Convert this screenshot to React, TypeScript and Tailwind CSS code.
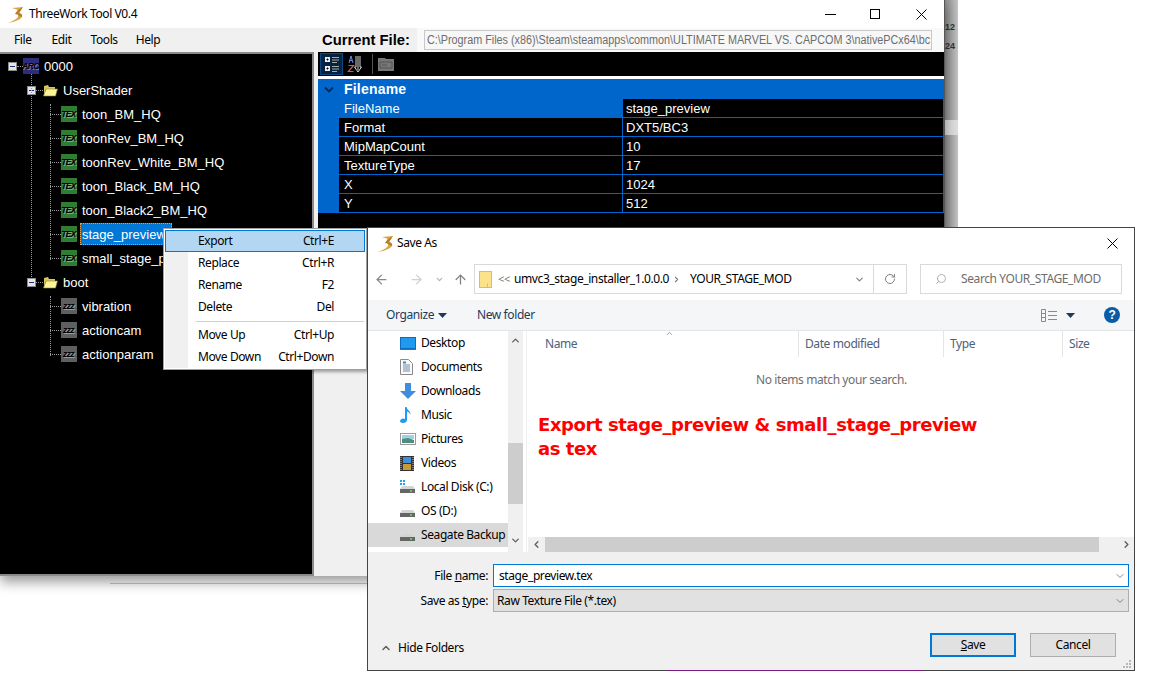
import type { ReactNode } from 'react'
import { ArrowLeft, ArrowRight, ArrowUp, ChevronDown, ChevronUp, ChevronLeft, ChevronRight, RotateCw, Search } from 'lucide-react'

const ui = "font-['Noto_Sans',sans-serif] tracking-[-0.4px]"
const classic = "font-['Liberation_Sans',sans-serif]"

function Logo() {
  return (
    <svg width="16" height="17" viewBox="0 0 16 17">
      <path d="M4 2 L15 1 L11 7 Q15 8 14 11 Q11 15 0 17 Q8 14 10 11 Q11 8 7 8 L10 4 Z" fill="#dba445" />
      <path d="M10 4 L15 1 L11 7 Q15 8 14 11 L11 10 Q11 8 7 8 Z" fill="#b97f28" />
    </svg>
  )
}

function Expander() {
  return (
    <span className="w-[9px] h-[9px] bg-[#e6e6e6] border border-[#8a8a8a] flex items-center justify-center shrink-0">
      <span className="w-[5px] h-px bg-[#1c2f78]" />
    </span>
  )
}

function FileIcon({ label, bg }: { label: string; bg: string }) {
  return (
    <span className={`${bg} w-4 h-4 shrink-0 flex items-center justify-center overflow-hidden pr-px font-['Liberation_Sans',sans-serif] font-bold italic text-[8.500px] tracking-[-0.6px] leading-none text-black [text-shadow:1px_1px_0_rgba(255,255,255,0.4)]`}>
      {label}
    </span>
  )
}

function FolderIcon() {
  return (
    <svg width="15" height="13" viewBox="0 0 15 13" className="shrink-0">
      <path d="M1 2 L5 1 L6 3 L12 3 L12 5 L3 5 L1 11 Z" fill="#d9c75a" />
      <path d="M0.5 12 L3 5 L14.5 5 L12.5 12 Z" fill="#fff59a" stroke="#8a8036" strokeWidth="0.6" />
    </svg>
  )
}

type TreeItem = { name: string; kind: 'tex' | 'raw' }

const userShader: TreeItem[] = [
  { name: 'toon_BM_HQ', kind: 'tex' },
  { name: 'toonRev_BM_HQ', kind: 'tex' },
  { name: 'toonRev_White_BM_HQ', kind: 'tex' },
  { name: 'toon_Black_BM_HQ', kind: 'tex' },
  { name: 'toon_Black2_BM_HQ', kind: 'tex' },
  { name: 'stage_preview', kind: 'tex' },
  { name: 'small_stage_preview', kind: 'tex' },
]

const boot: TreeItem[] = [
  { name: 'vibration', kind: 'raw' },
  { name: 'actioncam', kind: 'raw' },
  { name: 'actionparam', kind: 'raw' },
]

function LeafRow({ item }: { item: TreeItem }) {
  const selected = item.name === 'stage_preview'
  return (
    <div className="h-6 flex items-center pl-[61px]">
      <FileIcon label={item.kind === 'tex' ? 'TEX' : 'zzz'} bg={item.kind === 'tex' ? 'bg-[#2f7d32]' : 'bg-[#5f5f5f]'} />
      <span className={selected ? 'ml-[3px] pl-px w-[92px] h-[22px] leading-[21px] bg-[#0078d7] border border-dotted border-[#e8a050]' : 'ml-[5px] pt-[2px]'}>
        {item.name}
      </span>
    </div>
  )
}

function Tree() {
  return (
    <div className={`${classic} relative w-[314px] shrink-0 bg-black border-t-2 border-r-2 border-b-2 border-[#8a8a8a] text-[13px] text-white`}>
      <div className="h-6 flex items-center pl-2">
        <Expander />
        <span className="ml-[6px]"><FileIcon label="ARC" bg="bg-[#2d2d80]" /></span>
        <span className="ml-[5px] pt-[2px]">0000</span>
      </div>
      <div className="h-6 flex items-center pl-[27px]">
        <Expander />
        <span className="ml-[7px]"><FolderIcon /></span>
        <span className="ml-[5px] pt-[2px]">UserShader</span>
      </div>
      {userShader.map((item) => <LeafRow key={item.name} item={item} />)}
      <div className="h-6 flex items-center pl-[27px]">
        <Expander />
        <span className="ml-[7px]"><FolderIcon /></span>
        <span className="ml-[5px] pt-[2px]">boot</span>
      </div>
      {boot.map((item) => <LeafRow key={item.name} item={item} />)}
      {/* dotted connectors */}
      <div className="absolute left-[31px] top-[20px] h-[205px] border-l border-dotted border-[#9a9a9a]" />
      <div className="absolute left-[50px] top-[50px] h-[156px] border-l border-dotted border-[#9a9a9a]" />
      <div className="absolute left-[50px] top-[242px] h-[60px] border-l border-dotted border-[#9a9a9a]" />
      {[60, 84, 108, 132, 156, 180, 204, 252, 276, 300].map((top) => (
        <div key={top} className="absolute left-[50px] w-[11px] border-t border-dotted border-[#9a9a9a]" style={{ top }} />
      ))}
      <div className="absolute left-[17px] top-[12px] w-[6px] border-t border-dotted border-[#9a9a9a]" />
      <div className="absolute left-[36px] top-[36px] w-[7px] border-t border-dotted border-[#9a9a9a]" />
      <div className="absolute left-[36px] top-[228px] w-[7px] border-t border-dotted border-[#9a9a9a]" />
    </div>
  )
}

const props = [
  ['FileName', 'stage_preview'],
  ['Format', 'DXT5/BC3'],
  ['MipMapCount', '10'],
  ['TextureType', '17'],
  ['X', '1024'],
  ['Y', '512'],
]

function PropertyGrid() {
  return (
    <div className={`${classic} bg-[#0066cc] text-white text-[13px] pr-px`}>
      <div className="h-5 flex items-center pt-px">
        <svg width="12" height="8" viewBox="0 0 12 8" className="ml-[5px]">
          <path d="M2 1.5 L6 5.5 L10 1.5" fill="none" stroke="#0a2a55" strokeWidth="1.8" />
        </svg>
        <span className="ml-[9px] font-bold text-[14px] tracking-[0.2px]">Filename</span>
      </div>
      {props.map(([name, value], i) => (
        <div key={name} className="h-[19px] flex pl-[21px] leading-[17px]">
          <span className={`w-[283px] pl-[5px] pt-px border-b border-[#0066cc] ${i === 0 ? '' : 'bg-black'}`}>{name}</span>
          <span className="flex-1 ml-px pl-[3px] pt-px bg-black border-b border-[#0066cc]">{value}</span>
        </div>
      ))}
    </div>
  )
}

function MainWindow() {
  return (
    <div className="absolute left-0 top-0 w-[945px] h-[576px] flex flex-col bg-[#f0f0f0] border-r border-[#555555] shadow-[0_6px_12px_rgba(0,0,0,0.4)]">
      <div className={`${ui} h-7 shrink-0 bg-white flex items-center pl-2 text-[12px] text-black`}>
        <Logo />
        <span className="ml-[5px]">ThreeWork Tool V0.4</span>
        <div className="ml-auto flex items-center pr-[17px]">
          <span className="w-[11px] h-px bg-black" />
          <span className="ml-[34px] w-[10px] h-[10px] border border-black" />
          <svg width="11" height="11" viewBox="0 0 11 11" className="ml-[36px]">
            <path d="M0.5 0.5 L10.5 10.5 M10.5 0.5 L0.5 10.5" stroke="#000" strokeWidth="1" />
          </svg>
        </div>
      </div>
      <div className="h-6 shrink-0 flex bg-[#f9f9f9]">
        <div className={`${ui} w-[318px] bg-[#f0f0f0] flex items-center text-[12px] text-black`}>
          <span className="ml-[14px]">File</span>
          <span className="ml-[20px]">Edit</span>
          <span className="ml-[19px]">Tools</span>
          <span className="ml-[18px]">Help</span>
        </div>
        <div className={`${classic} w-[99px] pl-1 bg-[#f0f0f0] flex items-center font-bold text-[14.8px] text-black whitespace-nowrap`}>Current File:</div>
        <div className={`${classic} ml-[7px] mt-[2px] w-[508px] h-5 bg-[#f7f7f7] border border-[#c8c8c8] pl-[2px] pr-px text-[12px] leading-[18px] text-[#6d6d6d] overflow-hidden whitespace-nowrap`}>
          <span className="inline-block origin-left scale-x-[0.9]">
            {'C:\\Program Files (x86)\\Steam\\steamapps\\common\\ULTIMATE MARVEL VS. CAPCOM 3\\nativePCx64\\bc'}
          </span>
        </div>
      </div>
      <div className="flex flex-1 min-h-0">
        <Tree />
        <div className="ml-1 flex-1 flex flex-col">
          <div className="h-6 bg-black flex items-center pl-[2px]">
            <span className="w-[23px] h-[22px] bg-[#06233f] border border-[#0a4a80] flex items-center justify-center">
              <svg width="16" height="16" viewBox="0 0 16 16">
                <path d="M1 1h5v5H1zM1 10h5v5H1z" fill="#f0f0f0" />
                <path d="M2.5 3.5h2M3.5 2.5v2M2.5 12.5h2M3.5 11.5v2" stroke="#000" />
                <path d="M8 1.5h7M8 4h7M8 6.5h5M8 10.5h7M8 13h7M8 15.5h5" stroke="#aaaaaa" />
              </svg>
            </span>
            <svg width="18" height="18" viewBox="0 0 18 18" className="ml-[3px]">
              <path d="M3 8 L5 1 L7 8 M3.8 5.5 H6.2" fill="none" stroke="#6f8fe0" strokeWidth="1" />
              <path d="M2.5 10.5 H7.5 L2.5 16.5 H7.5" fill="none" stroke="#d05a5a" strokeWidth="1.2" />
              <path d="M12 1 V15 M10 1 V12 L8.5 12 L12 17 L15.5 12 L14 12 V1" fill="none" stroke="#e8e8e8" strokeWidth="0.9" />
            </svg>
            <span className="ml-[8px] w-px h-5 bg-[#555555]" />
            <svg width="16" height="14" viewBox="0 0 16 14" className="ml-[5px]">
              <path d="M0 1h7l1 1h8v12H0z" fill="#777777" />
              <path d="M2 5h12v6H2z" fill="none" stroke="#555555" />
              <path d="M4 8h5" stroke="#555555" />
            </svg>
          </div>
          <div className="h-[3px] bg-white" />
          <PropertyGrid />
          <div className="h-[15px] bg-black" />
        </div>
      </div>
    </div>
  )
}

const menuItems: ([string, string] | null)[] = [
  ['Export', 'Ctrl+E'],
  ['Replace', 'Ctrl+R'],
  ['Rename', 'F2'],
  ['Delete', 'Del'],
  null,
  ['Move Up', 'Ctrl+Up'],
  ['Move Down', 'Ctrl+Down'],
]

function ContextMenu() {
  return (
    <div className={`${ui} absolute left-[163px] top-[228px] w-[204px] h-[142px] bg-white border border-[#a0a0a0] p-px text-[12px] text-black shadow-[2px_2px_3px_rgba(0,0,0,0.35)]`}>
      <div className="absolute left-px top-px bottom-px w-[23px] bg-[#f0f0f0]" />
      {menuItems.map((item, i) =>
        item ? (
          <div key={item[0]} className={`relative h-[22px] flex items-center justify-between pl-[33px] pr-[31px] ${i === 0 ? 'bg-[#b3d7f3] border border-[#0078d7]' : ''}`}>
            <span className={i === 0 ? '-ml-px' : ''}>{item[0]}</span>
            <span className={i === 0 ? '-mr-px' : ''}>{item[1]}</span>
          </div>
        ) : (
          <div key="sep" className="relative h-[6px] flex items-center pl-[31px] pr-px">
            <span className="w-full h-px bg-[#d0d0d0]" />
          </div>
        ),
      )}
    </div>
  )
}

function NavIcon({ name }: { name: string }) {
  if (name === 'Desktop') {
    return (
      <svg width="16" height="13" viewBox="0 0 16 13">
        <rect x="0.5" y="0.5" width="15" height="11" fill="#1e9af0" stroke="#0f6cc0" />
        <path d="M0 12.5h16" stroke="#5a6a7a" />
      </svg>
    )
  }
  if (name === 'Documents') {
    return (
      <svg width="13" height="16" viewBox="0 0 13 16">
        <path d="M0.5 0.5h8l4 4v11h-12z" fill="#fafafa" stroke="#8a8a8a" />
        <path d="M3 6h7M3 8h7M3 10h7M3 12h7" stroke="#6a8ab0" />
        <path d="M3 2.5h3v2H3z" fill="#3a8ad0" />
      </svg>
    )
  }
  if (name === 'Downloads') {
    return (
      <svg width="16" height="16" viewBox="0 0 16 16">
        <path d="M5 0h6v8h5l-8 8-8-8h5z" fill="#3f8fdc" />
      </svg>
    )
  }
  if (name === 'Music') {
    return (
      <svg width="12" height="16" viewBox="0 0 12 16">
        <path d="M5 0h1.5c.5 3 4.500 4 4 8-.3-2-2-3-3.500-3.500V13c0 2-2 3-4 3-2 0-3-1-3-2s1.500-2.500 3-2.500c.8 0 1.500.2 2 .5z" fill="#1e9af0" />
      </svg>
    )
  }
  if (name === 'Pictures') {
    return (
      <svg width="16" height="12" viewBox="0 0 16 12">
        <rect x="0.500" y="0.500" width="15" height="11" fill="#fff" stroke="#9a9a9a" />
        <path d="M2 2h12v4H2z" fill="#9fd0e8" />
        <path d="M2 6 L8 5 L14 7 V10 H2 Z" fill="#4f8f7a" />
      </svg>
    )
  }
  if (name === 'Videos') {
    return (
      <svg width="14" height="15" viewBox="0 0 14 15">
        <rect width="14" height="15" fill="#333333" />
        <path d="M3 1h8v6H3z" fill="#3f8fdc" />
        <path d="M3 8h8v6H3z" fill="#c89a3a" />
        <path d="M1 1v13M13 1v13" stroke="#cccccc" strokeDasharray="1 1" />
      </svg>
    )
  }
  return (
    <svg width="15" height="14" viewBox="0 0 15 14">
      {name.startsWith('Local') && <path d="M0 0h2v2H0zM3 0h2v2H3zM0 3h2v2H0zM3 3h2v2H3z" fill="#1ea5f0" />}
      <path d="M2 6h11l2 3H0z" fill="#d4d4d4" />
      <rect x="0" y="9" width="15" height="4" fill="#666666" />
      <rect x="10" y="10" width="2" height="2" fill="#4fd04f" />
    </svg>
  )
}

const navItems = ['Desktop', 'Documents', 'Downloads', 'Music', 'Pictures', 'Videos', 'Local Disk (C:)', 'OS (D:)', 'Seagate Backup']

function HeaderCell({ label, width, pad }: { label: string; width: string; pad: string }) {
  return <div className={`${width} ${pad} h-[26px] leading-[25px] border-r border-[#e5e5e5] text-[#4c607a] shrink-0`}>{label}</div>
}

function Caret({ className, fill }: { className: string; fill: string }) {
  return (
    <svg width="9" height="5" viewBox="0 0 9 5" className={className}>
      <path d="M0 0h9L4.500 5z" fill={fill} />
    </svg>
  )
}

function SaveDialog() {
  return (
    <div className={`${ui} absolute left-[367px] top-[227px] w-[768px] h-[444px] flex flex-col bg-[#f0f0f0] border border-[#444444] text-[12px] text-black`}>
      <div className="h-[30px] shrink-0 bg-white flex items-center pl-[10px]">
        <Logo />
        <span className="ml-[3px]">Save As</span>
        <svg width="11" height="11" viewBox="0 0 11 11" className="ml-auto mr-[16px]">
          <path d="M0.500 0.500 L10.500 10.500 M10.500 0.500 L0.500 10.500" stroke="#000" strokeWidth="1" />
        </svg>
      </div>
      <div className="h-[42px] shrink-0 bg-white flex items-center">
        <ArrowLeft size={15} strokeWidth={2} className="ml-[6px] text-[#8a8a8a]" />
        <ArrowRight size={15} strokeWidth={2} className="ml-[20px] text-[#d0d0d0]" />
        <ChevronDown size={9} strokeWidth={3} className="ml-[11px] text-[#b0b0b0]" />
        <ArrowUp size={15} strokeWidth={2} className="ml-[9px] text-[#808080]" />
        <div className="ml-[6px] w-[400px] h-[30px] border border-[#d9d9d9] flex items-center">
          <svg width="13" height="17" viewBox="0 0 13 17" className="ml-[4px]">
            <rect x="0.500" y="0.500" width="12" height="16" fill="#fce28a" stroke="#e2bd55" />
            <path d="M8.500 12.500V16.500" stroke="#e2bd55" />
          </svg>
          <span className="ml-[6px] w-[16px] text-[#7a7a7a] text-[11px]">{'<<'}</span>
          <span>umvc3_stage_installer_1.0.0.0</span>
          <ChevronRight size={9} strokeWidth={3} className="ml-[3px] text-[#808080]" />
          <span className="ml-[9px]">YOUR_STAGE_MOD</span>
          <ChevronDown size={11} strokeWidth={2.500} className="ml-auto mr-[8px] text-[#808080]" />
        </div>
        <div className="w-[33px] h-[30px] border border-l-0 border-[#d9d9d9] flex items-center justify-center">
          <RotateCw size={12} strokeWidth={2} className="text-[#808080]" />
        </div>
        <div className="ml-[13px] w-[202px] h-[30px] border border-[#d9d9d9] flex items-center text-[#6d6d6d]">
          <Search size={12} strokeWidth={1.500} className="ml-[14px] -scale-x-100 text-[#9a9a9a]" />
          <span className="ml-[14px]">Search YOUR_STAGE_MOD</span>
        </div>
      </div>
      <div className="h-[31px] shrink-0 bg-[#f5f6f7] border-b border-[#e5e5e5] flex items-center text-[#1e395b]">
        <span className="ml-[18px] w-[51px]">Organize</span>
        <Caret className="ml-px" fill="#1e395b" />
        <span className="ml-[30px]">New folder</span>
        <svg width="16" height="13" viewBox="0 0 16 13" className="ml-auto">
          <path d="M0.500 0.500h4v12h-4zM0.500 4.500h4M0.500 8.500h4M7 2.500h9M7 6.500h9M7 10.500h9" fill="none" stroke="#8a8a8a" />
        </svg>
        <Caret className="ml-[9px]" fill="#1e395b" />
        <span className={`${classic} ml-[29px] mr-[14px] w-4 h-4 rounded-full bg-[#0a5ca8] text-white font-bold text-[12px] leading-4 text-center`}>?</span>
      </div>
      <div className="h-[221px] shrink-0 flex bg-white">
        <div className="w-[140px] shrink-0 overflow-hidden">
          {navItems.map((name) => (
            <div key={name} className={`h-6 flex items-center ${name === 'Seagate Backup' ? 'bg-[#d9d9d9]' : ''}`}>
              <span className="w-[53px] shrink-0 pl-[32px] flex justify-start"><NavIcon name={name} /></span>
              <span className="whitespace-nowrap">{name}</span>
            </div>
          ))}
        </div>
        <div className="w-[15px] shrink-0 bg-[#f0f0f0] flex flex-col items-center">
          <ChevronUp size={11} strokeWidth={3} className="mt-[4px] text-[#606060]" />
          <div className="mt-[97px] w-full h-[61px] bg-[#cdcdcd]" />
          <ChevronDown size={11} strokeWidth={3} className="mt-[31px] text-[#606060]" />
        </div>
        <div className="flex-1 flex flex-col ml-[3px] border-l border-[#f0f0f0] relative">
          <div className="flex h-[26px]">
            <HeaderCell label="Name" width="w-[272px]" pad="pl-[18px]" />
            <HeaderCell label="Date modified" width="w-[145px]" pad="pl-[6px]" />
            <HeaderCell label="Type" width="w-[119px]" pad="pl-[6px]" />
            <div className="pl-[6px] leading-[25px] text-[#4c607a]">Size</div>
          </div>
          <ChevronUp size={9} strokeWidth={2} className="absolute left-[138px] top-[-2px] text-[#808080]" />
          <div className="mt-[14px] ml-[229px] text-[#6d6d6d]">No items match your search.</div>
          <div className="mt-[24px] ml-[11px] font-['DejaVu_Sans',sans-serif] font-bold text-[18px] leading-6 tracking-[-0.42px] text-[#ff0000]">
            Export stage_preview &amp; small_stage_preview<br />as tex
          </div>
          <div className="mt-auto ml-[1px] h-[15px] flex items-center bg-[#f0f0f0]">
            <span className="w-[17px] flex justify-center"><ChevronLeft size={11} strokeWidth={3} className="text-[#606060]" /></span>
            <span className="w-[554px] h-full bg-[#cdcdcd]" />
            <ChevronRight size={11} strokeWidth={3} className="ml-auto mr-[2px] text-[#606060]" />
          </div>
        </div>
      </div>
      <div className="flex-1 pt-[12px] relative">
        <FormRow label={<>File <u>n</u>ame:</>}>
          <div className="w-[636px] h-[23px] bg-white border border-[#0078d7] flex items-center pl-[5px]">
            <span>stage_preview.tex</span>
            <ChevronDown size={12} strokeWidth={1.500} className="ml-auto mr-[2px] text-[#606060]" />
          </div>
        </FormRow>
        <div className="h-[2px]" />
        <FormRow label={<>Save as <u>t</u>ype:</>}>
          <div className="w-[636px] h-[23px] bg-[#e1e1e1] border border-[#adadad] flex items-center pl-[3px]">
            <span>Raw Texture File (*.tex)</span>
            <ChevronDown size={12} strokeWidth={1.500} className="ml-auto mr-[2px] text-[#606060]" />
          </div>
        </FormRow>
        <div className="mt-[21px] h-6 flex items-center">
          <ChevronUp size={12} strokeWidth={3} className="ml-[12px] mt-[6px] text-[#606060]" />
          <span className="ml-[6px] mt-[6px]">Hide Folders</span>
          <div className="ml-auto w-[86px] h-6 bg-[#e1e1e1] border-2 border-[#0078d7] flex items-center justify-center"><span><u>S</u>ave</span></div>
          <div className="ml-[14px] mr-[18px] w-[86px] h-6 bg-[#e1e1e1] border border-[#adadad] flex items-center justify-center">Cancel</div>
        </div>
        <svg width="9" height="9" viewBox="0 0 9 9" className="absolute right-[2px] bottom-[1px]">
          <path d="M6 0h2v2H6zM3 3h2v2H3zM6 3h2v2H6zM0 6h2v2H0zM3 6h2v2H3zM6 6h2v2H6z" fill="#b8b8b8" />
        </svg>
      </div>
      <div className="absolute left-[300px] -bottom-px w-[256px] h-px bg-[#7a1a80]" />
    </div>
  )
}

function FormRow({ label, children }: { label: ReactNode; children: ReactNode }) {
  return (
    <div className="flex items-center">
      <div className="w-[120px] text-right">{label}</div>
      <div className="ml-[5px]">{children}</div>
    </div>
  )
}

export default function App() {
  return (
    <div className="relative w-[1150px] h-[685px] overflow-hidden bg-white">
      {/* window behind the tool, only a sliver shows */}
      <div className="absolute left-[945px] top-0 w-[13px] h-[227px] bg-gradient-to-r from-[#8c8c8c] to-[#c4c4c4] font-['Liberation_Sans',sans-serif] font-bold text-[9px] leading-none text-[#333333]">
        <div className="absolute left-0 top-[23px]">12</div>
        <div className="absolute left-0 top-[42px]">24</div>
        <div className="absolute inset-x-0 top-[120px] h-[15px] bg-[#dddddd]" />
      </div>
      <div className="absolute left-[110px] top-[583px] w-[257px] h-px bg-[#c8c8c8]" />
      <MainWindow />
      <ContextMenu />
      <SaveDialog />
    </div>
  )
}
